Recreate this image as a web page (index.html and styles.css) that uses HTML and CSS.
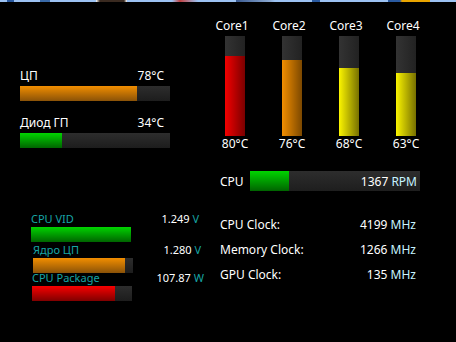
FILE: index.html
```html
<!DOCTYPE html>
<html lang="ru">
<head>
  <meta charset="UTF-8" />
  <meta name="viewport" content="width=device-width, initial-scale=1.0" />
  <title>System Monitor Gadget</title>
  <link rel="stylesheet" href="styles.css">
</head>
<body>

  <div class="desk"></div>

  <div class="gadget">
    <div class="col-left">
      <section class="temps">
        <div class="temp">
          <div class="temp-head"><span>ЦП</span><span>78°C</span></div>
          <div class="hbar"><div class="fill orange" style="width:78%"></div></div>
        </div>
        <div class="temp">
          <div class="temp-head"><span>Диод ГП</span><span>34°C</span></div>
          <div class="hbar"><div class="fill green" style="width:28%"></div></div>
        </div>
      </section>

      <section class="volts">
        <div class="volt volt-vid">
          <div class="volt-head"><span class="volt-name">CPU VID</span><span class="volt-val">1.249 <span class="unit-t">V</span></span></div>
          <div class="hbar small"><div class="fill green" style="width:100%"></div></div>
        </div>
        <div class="volt volt-core">
          <div class="volt-head"><span class="volt-name">Ядро ЦП</span><span class="volt-val">1.280 <span class="unit-t">V</span></span></div>
          <div class="hbar small"><div class="fill orange" style="width:92%"></div></div>
        </div>
        <div class="volt volt-pkg">
          <div class="volt-head"><span class="volt-name">CPU Package</span><span class="volt-val">107.87 <span class="unit-t">W</span></span></div>
          <div class="hbar small"><div class="fill red" style="width:83%"></div></div>
        </div>
      </section>
    </div>

    <div class="col-right">
      <div class="cores">
        <div class="core">
          <div class="core-name">Core1</div>
          <div class="vbar"><div class="vfill red" style="height:80%"></div></div>
          <div class="core-temp">80°C</div>
        </div>
        <div class="core">
          <div class="core-name">Core2</div>
          <div class="vbar"><div class="vfill orange" style="height:76%"></div></div>
          <div class="core-temp">76°C</div>
        </div>
        <div class="core">
          <div class="core-name">Core3</div>
          <div class="vbar"><div class="vfill yellow" style="height:68%"></div></div>
          <div class="core-temp">68°C</div>
        </div>
        <div class="core">
          <div class="core-name">Core4</div>
          <div class="vbar"><div class="vfill yellow" style="height:63%"></div></div>
          <div class="core-temp">63°C</div>
        </div>
      </div>

      <div class="fan">
        <span>CPU</span>
        <div class="fan-bar">
          <div class="fill green" style="width:23%"></div>
          <span class="fan-val">1367 <span class="unit">RPM</span></span>
        </div>
      </div>

      <div class="clocks">
        <div class="clock"><span>CPU Clock:</span><span>4199 <span class="unit">MHz</span></span></div>
        <div class="clock"><span>Memory Clock:</span><span>1266 <span class="unit">MHz</span></span></div>
        <div class="clock"><span>GPU Clock:</span><span>135 <span class="unit">MHz</span></span></div>
      </div>
    </div>
  </div>

</body>
</html>
```

FILE: styles.css
```css
html, body {
  margin: 0;
  height: 100%;
  background: #000;
}
body {
  font-family: "Noto Sans", "Open Sans", sans-serif;
  font-size: 12px;
  color: #fff;
  overflow: hidden;
}

/* strip of desktop wallpaper above the gadget */
.desk {
  height: 2px;
  background: linear-gradient(to right,
    #9cc2f2 0, #9cc2f2 7px, #2a5aa0 7px, #2a5aa0 14px, #9cc2f2 14px,
    #9cc2f2 40px, #3a6aa8 40px, #3a6aa8 50px, #9cc2f2 50px,
    #9cc2f2 96px, #ffffff 96px, #3a2a20 100px, #3a2a20 124px, #ffffff 127px,
    #9cc2f2 127px, #9cc2f2 172px, #c04040 180px, #9cc2f2 198px,
    #9cc2f2 236px, #3a5a90 236px, #8aa8d0 270px, #9cc2f2 275px,
    #9cc2f2 312px, #2a5aa0 312px, #2a5aa0 320px, #9cc2f2 320px,
    #9cc2f2 388px, #2a5aa0 388px, #2a5aa0 400px, #e8a400 402px, #e8a400 430px, #9cc2f2 430px);
}

.gadget {
  display: grid;
  grid-template-columns: 207px 1fr;
}

/* ---- bars ---- */
.hbar {
  display: flex;
  height: 15px;
  background: linear-gradient(#2d2d2d, #1d1d1d);
}
.fill {
  height: 100%;
}
.fill.orange { background: linear-gradient(#f28e00, #8a5208); }
.fill.green  { background: linear-gradient(#00d400, #006400); }
.fill.red    { background: linear-gradient(#f80000, #800000); }

/* ---- temperatures ---- */
.temps {
  padding: 66px 0 0 20px;
  width: 150px;
}
.temp + .temp {
  margin-top: 14px;
}
.temp-head {
  display: flex;
  justify-content: space-between;
  line-height: 16px;
  padding-right: 6px;
}
.temp .hbar {
  margin-top: 2px;
}

/* ---- voltages ---- */
.volts {
  margin-top: 65px;
  font-size: 11px;
}
.volt-head {
  display: flex;
  justify-content: space-between;
  line-height: 11px;
}
.volt-name {
  color: #17a5a5;
}
.unit-t {
  color: #17a5a5;
}
.volt .hbar {
  width: 100px;
  margin-top: 3px;
}
.volt-vid  { padding-left: 31px; width: 168px; }
.volt-core { padding-left: 33px; width: 168px; margin-top: 2px; }
.volt-pkg  { padding-left: 32px; width: 172px; margin-top: -1px; }

/* ---- cores ---- */
.cores {
  display: flex;
  gap: 1px;
  padding-top: 16px;
}
.core {
  width: 56px;
  display: flex;
  flex-direction: column;
  align-items: center;
}
.core-name {
  line-height: 16px;
  padding-right: 6px;
}
.vbar {
  width: 20px;
  height: 100px;
  margin-top: 2px;
  display: flex;
  flex-direction: column;
  justify-content: flex-end;
  background: linear-gradient(to right, #333, #222);
}
.vfill.red    { background: linear-gradient(to right, #f40000, #7a0000); }
.vfill.orange { background: linear-gradient(to right, #f28e00, #7c4800); }
.vfill.yellow { background: linear-gradient(to right, #fbf500, #777000); }
.core-temp {
  line-height: 16px;
}

/* ---- fan ---- */
.fan {
  display: flex;
  justify-content: space-between;
  align-items: center;
  margin: 19px 0 0 13px;
  width: 200px;
}
.fan-bar {
  display: grid;
  width: 170px;
  height: 20px;
  background: linear-gradient(#2d2d2d, #1e1e1e);
}
.fan-bar .fill,
.fan-val {
  grid-area: 1 / 1;
}
.fan-val {
  justify-self: end;
  align-self: center;
  padding-right: 3px;
}
.unit {
  color: #c6f4ff;
}

/* ---- clocks ---- */
.clocks {
  margin: 21px 0 0 13px;
  width: 196px;
}
.clock {
  display: flex;
  justify-content: space-between;
  line-height: 25px;
}
```
